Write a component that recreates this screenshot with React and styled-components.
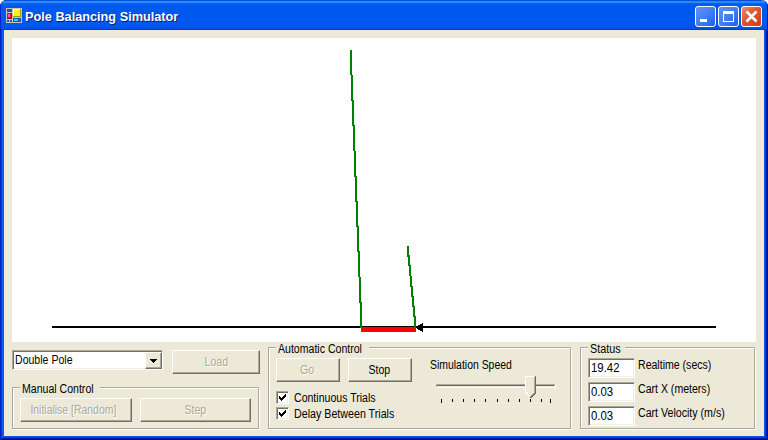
import React from 'react';
import styled, { createGlobalStyle, css } from 'styled-components';

const GlobalStyle = createGlobalStyle`
  * { box-sizing: border-box; }
  body { margin: 0; overflow: hidden; background: #fff; }
`;

const Window = styled.div`
  width: 768px;
  height: 440px;
  display: flex;
  flex-direction: column;
  background: #ece9d8;
  padding: 0 4px 4px;
  box-shadow:
    inset 1px 0 0 #0020c8, inset -1px -1px 0 #00138c,
    inset 2px 0 0 #0838dc, inset -2px -2px 0 #001ca4,
    inset 3px 0 0 #1460f0, inset -3px -3px 0 #0840d8,
    inset 4px 0 0 #0855dd, inset -4px -4px 0 #0855e8;
  border-radius: 7px 7px 0 0;
  font-family: 'Liberation Sans', Arial, sans-serif;
  font-size: 12px;
  line-height: 14px;
  color: #000;
  overflow: hidden;
`;

const TitleBar = styled.header`
  height: 30px;
  margin: 0 -3px;
  padding: 6px 5px 0 5px;
  flex: none;
  display: flex;
  align-items: flex-start;
  background: linear-gradient(#0050d8 0, #0050d8 1px, #2b87fa 1px, #2b87fa 3px, #0764ee 3px, #0058ee 5px, #0058ee 25px, #0050e4 29px, #003cc8 29px);
`;

const Title = styled.h1`
  flex: 1;
  margin: 2px 0 0 3px;
  font: bold 13px/18px 'Liberation Sans', Arial, sans-serif;
  color: #fff;
  text-shadow: 1px 1px 0 #06206c;
  white-space: nowrap;
  transform: scaleX(0.978);
  transform-origin: left;
`;

const WindowButtons = styled.div`
  display: flex;
  gap: 2px;
`;

const CaptionButton = styled.button`
  width: 21px;
  height: 21px;
  padding: 0;
  display: block;
  border: 1px solid #fff;
  border-radius: 3px;
  background: ${p => p.$close
    ? 'linear-gradient(135deg, #eb8e72, #e2522c 45%, #d04018)'
    : 'linear-gradient(135deg, #5f90f2, #4a80f2 45%, #1f60ec)'};
  svg { display: block; }
`;

const Client = styled.main`
  flex: 1;
  padding: 8px 8px 0;
  display: flex;
  flex-direction: column;
  gap: 5px;
`;

const SimulationView = styled.div`
  width: 744px;
  height: 304px;
  background: #fff;
  svg { display: block; }
`;

const Controls = styled.div`
  display: grid;
  grid-template-columns: 248px 303px 175px;
  column-gap: 8px;
  height: 82px;
  & > :last-child { margin-left: 1px; }
`;

const LeftColumn = styled.div`
  display: flex;
  flex-direction: column;
  justify-content: space-between;
  padding-top: 3px;
`;

const Row = styled.div`
  display: flex;
  gap: ${p => p.$gap || 8}px;
`;

const Text = styled.span`
  display: inline-block;
  white-space: nowrap;
  transform: scaleX(${p => p.$scale || 0.88});
  transform-origin: ${p => p.$origin || 'left'};
`;

const Group = styled.section`
  position: relative;
  width: ${p => p.$w}px;
  height: ${p => p.$h}px;
  border: 1px solid #aca899;
  box-shadow: 1px 1px 0 #fff, inset 1px 1px 0 #fff;
  padding: ${p => p.$pad};
`;

const Legend = styled.h2`
  position: absolute;
  top: -6px;
  left: ${p => p.$left || 7}px;
  width: ${p => p.$w}px;
  height: 14px;
  margin: 0;
  padding-left: 2px;
  font: inherit;
  background: #ece9d8;
`;

const sunken = css`
  border: 1px solid;
  border-color: #aca899 #fff #fff #aca899;
  box-shadow: inset 1px 1px 0 #716f64, inset -1px -1px 0 #f1efe2;
  background: #fff;
`;

const raised = css`
  border: 1px solid;
  border-color: #fff #716f64 #716f64 #fff;
  box-shadow: inset -1px -1px 0 #aca899;
  background: #ece9d8;
`;

const Button = styled.button`
  ${raised}
  width: ${p => p.$w}px;
  height: 24px;
  padding: 0 ${p => p.$shift || 0}px 0 0;
  font: inherit;
  line-height: 22px;
  text-align: center;
  white-space: nowrap;
  color: #000;
  &:disabled { color: #aca899; text-shadow: 1px 1px 0 #fff; }
`;

const Combo = styled.div`
  ${sunken}
  width: 151px;
  height: 20px;
  margin-right: 1px;
  padding: 1px 0 0 2px;
  display: flex;
  justify-content: space-between;
  line-height: 16px;
`;

const ComboArrow = styled.div`
  ${raised}
  width: 17px;
  height: 17px;
  svg { display: block; }
`;

const ButtonRow = styled(Row)`
  height: 24px;
`;

const AutoBody = styled.div`
  display: flex;
  justify-content: space-between;
`;

const CheckList = styled.div`
  display: flex;
  flex-direction: column;
  gap: 3px;
  margin-top: 9px;
`;

const CheckRow = styled.label`
  display: flex;
  gap: 5px;
  height: 13px;
`;

const CheckBox = styled.span`
  ${sunken}
  width: 13px;
  height: 13px;
  svg { display: block; }
`;

const SpeedPanel = styled.div`
  width: 126px;
  svg { display: block; margin-top: 2px; }
`;

const Fields = styled.div`
  display: flex;
  flex-direction: column;
  gap: 4px;
`;

const Field = styled.label`
  display: flex;
  gap: 3px;
  height: 20px;
`;

const Value = styled.output`
  ${sunken}
  width: 47px;
  height: 20px;
  padding: 2px 0 0 2px;
`;

const Check = () => (
  <CheckBox>
    <svg width="11" height="11" viewBox="0 0 11 11" shapeRendering="crispEdges">
      <path d="M2 4h1v1h1v1h1V5h1V4h1V3h1V2h1v3H8v1H7v1H6v1H5v1H4V8H3V7H2z" />
    </svg>
  </CheckBox>
);

const AppIcon = () => (
  <svg width="16" height="18" viewBox="0 -2 16 18" shapeRendering="crispEdges">
    <path fill="#c8c4b4" d="M0 0h16v15H0z" />
    <path fill="#1455cc" d="M1 1h5v3H1zM1 12h2v2H1zM4 12h2v2H4zM7 10h8v4H7z" />
    <path fill="#a00028" d="M1 5h5v6H1z" />
    <path fill="#f80030" d="M1 5h4v5H1z" />
    <path fill="#ff50c0" d="M2 6h2v3H2z" />
    <path fill="#a89800" d="M7 1h8v8H7z" />
    <path fill="#ffffd0" d="M7 1h7v7H7z" />
    <path fill="#fff000" d="M8 2h6v6H8z" />
    <path fill="#20d8f0" d="M8 11h4v2H8z" />
  </svg>
);

const PoleDrawing = () => (
  <svg width="744" height="304" viewBox="12 38 744 304" shapeRendering="crispEdges">
    <path d="M52 326h664v2H52z" />
    <path fill="#f00" d="M361 327h55v5h-55z" />
    <path d="M361 326h55v1h-55z" />
    <g fill="#008000">
      {Array.from({ length: 11 }, (_, i) => {
        const y = i === 0 ? 50 : 75 + (i - 1) * 25.2;
        return <rect key={i} x={350 + i} y={Math.round(y)} width="2" height={i === 0 ? 25 : 26} />;
      })}
      {Array.from({ length: 8 }, (_, i) => (
        <rect key={i} x={407 + i} y={i === 0 ? 246 : 245 + i * 10.2} width="2" height="11" />
      ))}
    </g>
    <path d="M416 327h1v-1h1v-1h2v-1h2v-1h1v9h-1v-1h-2v-1h-2v-1h-1v-1h-1z" />
  </svg>
);

const TICKS = [441, 452, 463, 474, 485, 497, 508, 519, 530, 541, 550];

const SpeedSlider = () => (
  <svg width="126" height="32" viewBox="430 374 126 32" shapeRendering="crispEdges">
    <path fill="#fff" d="M436 384h120v4H436z" />
    <path fill="#aca899" d="M436 384h119v3H436z" />
    <path fill="#716f64" d="M437 385h117v1H437z" />
    <path fill="#ece9d8" d="M437 386h118v1H437z" />
    <path fill="#716f64" d="M525 376h11v17l-5 5h-1l-5-5z" />
    <path fill="#fff" d="M525 376h10v17l-5 4-5-4z" />
    <path fill="#aca899" d="M534 377h1v16l-5 4v-1l4-4z" />
    <path fill="#ece9d8" d="M526 377h8v15l-4 4-4-4z" />
    {TICKS.map((x, i) => (
      <rect key={x} x={x} y="399" width="1" height={i === 0 || i === 10 ? 4 : 3} />
    ))}
  </svg>
);

export default function App() {
  return (
    <>
      <GlobalStyle />
      <Window>
        <TitleBar>
          <AppIcon />
          <Title>Pole Balancing Simulator</Title>
          <WindowButtons>
            <CaptionButton aria-label="Minimize">
              <svg width="19" height="19"><path fill="#fff" d="M4 12h7v3H4z" /></svg>
            </CaptionButton>
            <CaptionButton aria-label="Maximize">
              <svg width="19" height="19"><path fill="#fff" fillRule="evenodd" d="M4 4h11v11H4zM5 7v7h9V7z" /></svg>
            </CaptionButton>
            <CaptionButton $close aria-label="Close">
              <svg width="19" height="19"><path stroke="#fff" strokeWidth="2.6" d="M4.5 4.5l10 10M14.5 4.5l-10 10" /></svg>
            </CaptionButton>
          </WindowButtons>
        </TitleBar>
        <Client>
          <SimulationView><PoleDrawing /></SimulationView>
          <Controls>
            <LeftColumn>
              <Row>
                <Combo>
                  <Text>Double Pole</Text>
                  <ComboArrow>
                    <svg width="15" height="15" shapeRendering="crispEdges"><path d="M4 6h7v1h-1v1H9v1H8v1H7V9H6V8H5V7H4z" /></svg>
                  </ComboArrow>
                </Combo>
                <Button $w={88} disabled><Text $origin="center">Load</Text></Button>
              </Row>
              <Group $w={247} $h={42} $pad="10px 7px">
                <Legend $w={80}><Text>Manual Control</Text></Legend>
                <ButtonRow>
                  <Button $w={112} $shift={5} disabled><Text $origin="center" $scale={0.87}>Initialise [Random]</Text></Button>
                  <Button $w={112} disabled><Text $origin="center">Step</Text></Button>
                </ButtonRow>
              </Group>
            </LeftColumn>
            <Group $w={303} $h={82} $pad="10px 14px 0 7px">
              <Legend $w={93}><Text>Automatic Control</Text></Legend>
              <AutoBody>
                <div>
                  <ButtonRow>
                    <Button $w={64} $shift={2} disabled><Text $origin="center">Go</Text></Button>
                    <Button $w={64} $shift={1}><Text $origin="center">Stop</Text></Button>
                  </ButtonRow>
                  <CheckList>
                    <CheckRow><Check /><Text>Continuous Trials</Text></CheckRow>
                    <CheckRow><Check /><Text $scale={0.89}>Delay Between Trials</Text></CheckRow>
                  </CheckList>
                </div>
                <SpeedPanel>
                  <Text $scale={0.87}>Simulation Speed</Text>
                  <SpeedSlider />
                </SpeedPanel>
              </AutoBody>
            </Group>
            <Group $w={175} $h={82} $pad="10px 0 0 7px">
              <Legend $w={37}><Text $scale={0.9}>Status</Text></Legend>
              <Fields>
                <Field><Value><Text $scale={0.95}>19.42</Text></Value><Text>Realtime (secs)</Text></Field>
                <Field><Value><Text $scale={0.95}>0.03</Text></Value><Text>Cart X (meters)</Text></Field>
                <Field><Value><Text $scale={0.95}>0.03</Text></Value><Text $scale={0.885}>Cart Velocity (m/s)</Text></Field>
              </Fields>
            </Group>
          </Controls>
        </Client>
      </Window>
    </>
  );
}
